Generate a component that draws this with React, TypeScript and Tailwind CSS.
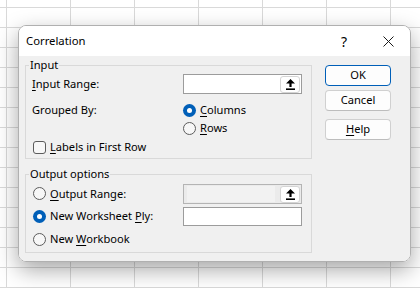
import React from 'react';

const font = { fontFamily: '"Noto Sans", "Open Sans", sans-serif' };

const Key: React.FC<{ children: React.ReactNode }> = ({ children }) => (
  <span className="underline decoration-1 underline-offset-[2px]">{children}</span>
);

const Radio: React.FC<{ checked?: boolean }> = ({ checked }) =>
  checked ? (
    <span className="w-[13px] h-[13px] rounded-full bg-[#005fb8] flex items-center justify-center shrink-0">
      <span className="w-[5px] h-[5px] rounded-full bg-white" />
    </span>
  ) : (
    <span className="w-[13px] h-[13px] rounded-full border border-[#5c5c5c] bg-[#f7f7f7] shrink-0" />
  );

const UpArrow = () => (
  <svg width="9" height="11" viewBox="0 0 9 11">
    <path d="M4.5 0 L9 4.6 H5.6 V8 H3.4 V4.6 H0 Z" fill="#000" />
    <rect x="0" y="9.4" width="9" height="1.6" fill="#000" />
  </svg>
);

const RangeBox: React.FC<{ disabled?: boolean }> = ({ disabled }) => (
  <div
    className={`w-[119px] h-[20px] border flex items-center justify-end pr-[1px] ${
      disabled ? 'border-[#b4b4b4] bg-[#ebebeb]' : 'border-[#9c9c9c] bg-white'
    }`}
  >
    {disabled && <div className="flex-1 h-[16px] ml-[3px] mr-[5px] bg-[#f2f2f2]" />}
    <div className="w-[20px] h-[17px] rounded-[3px] border border-[#d4d4d4] bg-white flex items-center justify-center">
      <UpArrow />
    </div>
  </div>
);

const Button: React.FC<{ primary?: boolean; children: React.ReactNode; className?: string }> = ({
  primary,
  children,
  className = '',
}) => (
  <div
    className={`h-[21px] w-[66px] rounded-[4px] border bg-[#fdfdfd] flex items-center justify-center ${
      primary ? 'border-[#005fb8]' : 'border-[#d0d0d0] border-b-[#bdbdbd]'
    } ${className}`}
  >
    {children}
  </div>
);

export default function App() {
  return (
    <div
      className="w-[420px] h-[288px] overflow-hidden bg-white bg-[linear-gradient(to_right,#d9d9d9_1px,transparent_1px),linear-gradient(to_bottom,#d9d9d9_1px,transparent_1px)] bg-size-[64px_20px] bg-position-[6px_7px] pt-[25px] pl-[18px] text-black"
      style={font}
    >
      <div className="w-[393px] h-[237px] flex flex-col rounded-[8px] border border-[#b0b0b0] overflow-hidden shadow-[0_8px_22px_rgba(0,0,0,0.35)]">
        {/* title bar */}
        <div className="h-[30px] bg-white flex items-center pl-[7px] pr-[16px] shrink-0">
          <span className="text-[11.3px] flex-1">Correlation</span>
          <span className="text-[14px] mr-[36px]">?</span>
          <svg width="11" height="11" viewBox="0 0 11 11">
            <path d="M0.5 0.5 L10.5 10.5 M10.5 0.5 L0.5 10.5" stroke="#1a1a1a" strokeWidth="1" />
          </svg>
        </div>

        {/* body */}
        <div className="flex-1 bg-[#f0f0f0] flex pl-[6px] pt-[9px] text-[11.1px]">
          <div className="w-[287px] flex flex-col">
            {/* Input group */}
            <div className="border border-[#d9d9d9] flex flex-col pl-[6px] pr-[9px] pb-[2px]">
              <span className="self-start -mt-[9px] -ml-[3px] h-[16px] leading-[16px] px-[1px] bg-[#f0f0f0]">
                Input
              </span>
              <div className="mt-[1px] h-[20px] flex items-center">
                <span className="w-[151px]">
                  <Key>I</Key>nput Range:
                </span>
                <RangeBox />
              </div>
              <div className="mt-[7px] h-[18px] flex items-center">
                <span className="w-[151px]">Grouped By:</span>
                <Radio checked />
                <span className="ml-[4px]">
                  <Key>C</Key>olumns
                </span>
              </div>
              <div className="h-[18px] flex items-center">
                <span className="w-[151px]" />
                <Radio />
                <span className="ml-[4px]">
                  <Key>R</Key>ows
                </span>
              </div>
              <div className="mt-[1px] h-[18px] flex items-center pl-[1px]">
                <span className="w-[13px] h-[13px] rounded-[3px] border border-[#5c5c5c] bg-[#f7f7f7] shrink-0" />
                <span className="ml-[4px]">
                  <Key>L</Key>abels in First Row
                </span>
              </div>
            </div>

            {/* Output group */}
            <div className="mt-[15px] border border-[#d9d9d9] flex flex-col pl-[6px] pr-[9px] pb-[3px]">
              <span className="self-start -mt-[9px] -ml-[3px] h-[16px] leading-[16px] px-[1px] bg-[#f0f0f0]">
                Output options
              </span>
              <div className="mt-[2px] h-[20px] flex items-center">
                <span className="w-[151px] flex items-center pl-[1px]">
                  <Radio />
                  <span className="ml-[4px]">
                    <Key>O</Key>utput Range:
                  </span>
                </span>
                <RangeBox disabled />
              </div>
              <div className="mt-[3px] h-[19px] flex items-center">
                <span className="w-[151px] flex items-center pl-[1px]">
                  <Radio checked />
                  <span className="ml-[4px]">
                    New Worksheet <Key>P</Key>ly:
                  </span>
                </span>
                <div className="w-[119px] h-[19px] border border-[#9c9c9c] bg-white" />
              </div>
              <div className="mt-[4px] h-[19px] flex items-center pl-[1px]">
                <Radio />
                <span className="ml-[4px]">
                  New <Key>W</Key>orkbook
                </span>
              </div>
            </div>
          </div>

          {/* buttons */}
          <div className="ml-[13px] flex flex-col">
            <Button primary>OK</Button>
            <Button className="mt-[4px]">Cancel</Button>
            <Button className="mt-[8px]">
              <Key>H</Key>elp
            </Button>
          </div>
        </div>
      </div>
    </div>
  );
}
